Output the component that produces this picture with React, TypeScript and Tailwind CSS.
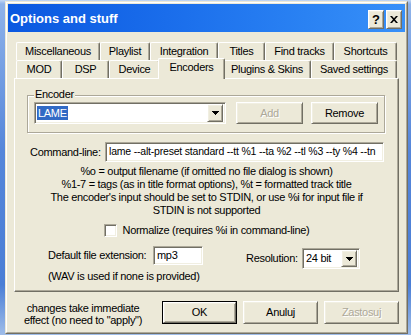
const raised =
  "border border-t-white border-l-white border-r-[#716f64] border-b-[#716f64] shadow-[inset_1px_1px_0_#f1efe2,inset_-1px_-1px_0_#aca899] bg-[#ece9d8]";
const sunken =
  "border border-t-[#aca899] border-l-[#aca899] border-r-white border-b-white shadow-[inset_1px_1px_0_#716f64,inset_-1px_-1px_0_#f1efe2] bg-white";

function Arrow() {
  return (
    <svg width="7" height="4" viewBox="0 0 7 4" className="block">
      <path d="M0 0h7v1h-1v1h-1v1h-1v1h-1v-1h-1v-1h-1v-1h-1z" fill="#000" />
    </svg>
  );
}

function Tab({ label, w }: { label: string; w: number }) {
  return (
    <div
      style={{ width: w }}
      className="h-[18px] shrink-0 flex items-center justify-center border-t border-l border-r border-t-white border-l-white border-r-[#716f64] rounded-t-[2px] shadow-[inset_-1px_0_0_#aca899] bg-[#ece9d8] whitespace-nowrap"
    >
      {label}
    </div>
  );
}

export default function App() {
  const row1: [string, number][] = [
    ["Miscellaneous", 84],
    ["Playlist", 50],
    ["Integration", 68],
    ["Titles", 47],
    ["Find tracks", 69],
    ["Shortcuts", 63],
  ];
  return (
    <div className="w-[411px] h-[335px] overflow-hidden bg-[linear-gradient(180deg,#c4d8f4_0px,#8fb3ea_4px,#5586da_45%,#4a7ed6_85%,#9fbde9_100%)] font-['Liberation_Sans',Arial,sans-serif] text-[11px] tracking-[-0.3px] text-black">
      <div className="ml-[5px] mt-[1px] w-[403px] h-[333px] border border-t-[#ece9d8] border-l-[#ece9d8] border-r-[#716f64] border-b-[#716f64]">
        <div className="w-full h-full border border-t-white border-l-white border-r-[#aca899] border-b-[#aca899] bg-[#ece9d8] p-[1px] flex flex-col">
          {/* Title bar */}
          <div className="h-[28px] shrink-0 flex bg-[linear-gradient(90deg,#0a58e0_0%,#1a6deb_40%,#2a82f3_75%,#3890f8_100%)]">
            <div className="pl-[2px] pt-[7px] text-white font-bold text-[13px] leading-[16px] tracking-normal">
              Options and stuff
            </div>
            <div className="ml-auto mt-[6px] mr-[3px] flex gap-[2px] h-[19px]">
              <div className={`${raised} w-[16px] h-[19px] flex items-center justify-center font-bold text-[13px] leading-none tracking-normal`}>
                ?
              </div>
              <div className={`${raised} w-[16px] h-[19px] flex items-center justify-center`}>
                <svg width="8" height="7" viewBox="0 0 8 7">
                  <path d="M0 0h2l2 2.3L6 0h2L5 3.5 8 7H6L4 4.7 2 7H0l3-3.5z" fill="#000" />
                </svg>
              </div>
            </div>
          </div>

          {/* Client */}
          <div className="flex-1 pt-[10px]">
            <div className="ml-[6px] w-[385px]">
              {/* tab rows */}
              <div className="pl-[2px]">
                <div className="flex h-[18px]">
                  {row1.map(([l, w]) => (
                    <Tab key={l} label={l} w={w} />
                  ))}
                </div>
                <div className="flex h-[18px] items-end">
                  <Tab label="MOD" w={46} />
                  <Tab label="DSP" w={47} />
                  <Tab label="Device" w={51} />
                  <div className="relative z-10 w-[67px] h-[21px] -mx-[2px] -mb-[1px] shrink-0 flex items-center justify-center pb-[4px] border-t border-l border-r border-t-white border-l-white border-r-[#716f64] rounded-t-[2px] shadow-[inset_-1px_0_0_#aca899] bg-[#ece9d8]">
                    Encoders
                  </div>
                  <Tab label="Plugins & Skins" w={88} />
                  <Tab label="Saved settings" w={86} />
                </div>
              </div>

              {/* panel */}
              <div className="h-[214px] border-t border-l border-r border-b border-t-white border-l-white border-r-[#716f64] border-b-[#716f64] shadow-[inset_-1px_-1px_0_#aca899] flex flex-col">
                {/* Encoder group */}
                <div className="relative ml-[12px] mt-[16px] w-[358px] h-[38px] border border-[#aca899] shadow-[inset_1px_1px_0_#fff,1px_1px_0_#fff]">
                  <span className="absolute left-[6px] -top-[8px] px-[1px] bg-[#ece9d8] leading-[13px]">
                    Encoder
                  </span>
                  <div className="flex items-center pl-[6px] pt-[6px]">
                    <div className={`${sunken} w-[192px] h-[22px] flex items-center pl-[2px] pr-[2px]`}>
                      <span className="bg-[#316ac5] text-white leading-[14px] px-[1px]">LAME</span>
                      <div className={`${raised} ml-auto w-[16px] h-[18px] flex items-center justify-center`}>
                        <Arrow />
                      </div>
                    </div>
                    <div className={`${raised} ml-[10px] w-[67px] h-[22px] flex items-center justify-center text-[#aca899] [text-shadow:1px_1px_0_#fff]`}>
                      Add
                    </div>
                    <div className={`${raised} ml-[8px] w-[67px] h-[22px] flex items-center justify-center`}>
                      Remove
                    </div>
                  </div>
                </div>

                {/* Command line */}
                <div className="mt-[9px] ml-[15px] flex items-center">
                  <span className="w-[75px]">Command-line:</span>
                  <div className={`${sunken} w-[279px] h-[20px] flex items-center pl-[3px] whitespace-nowrap overflow-hidden text-[10.5px] tracking-[-0.2px]`}>
                    lame --alt-preset standard --tt %1 --ta %2 --tl %3 --ty %4 --tn
                  </div>
                </div>

                {/* Info */}
                <div className="mt-[3px] text-center leading-[13px]">
                  %o = output filename (if omitted no file dialog is shown)
                  <br />
                  %1-7 = tags (as in title format options), %t = formatted track title
                  <br />
                  The encoder's input should be set to STDIN, or use %i for input file if
                  <br />
                  STDIN is not supported
                </div>

                {/* Normalize */}
                <div className="mt-[7px] flex justify-center items-center h-[13px] gap-[6px]">
                  <div className={`${sunken} w-[13px] h-[13px]`} />
                  <span className="leading-[13px]">Normalize (requires %i in command-line)</span>
                </div>

                {/* ext / resolution */}
                <div className="mt-[9px] ml-[33px] flex">
                  <div className="w-[155px]">
                    <div className="flex items-center h-[19px]">
                      <span className="w-[105px] whitespace-nowrap">Default file extension:</span>
                      <div className={`${sunken} w-[50px] h-[19px] flex items-center pl-[3px]`}>mp3</div>
                    </div>
                    <div className="mt-[5px] leading-[13px] whitespace-nowrap">
                      (WAV is used if none is provided)
                    </div>
                  </div>
                  <div className="ml-[43px] mt-[2px] flex items-center h-[21px]">
                    <span className="w-[56px]">Resolution:</span>
                    <div className={`${sunken} w-[58px] h-[21px] flex items-center pl-[3px] pr-[2px]`}>
                      <span>24 bit</span>
                      <div className={`${raised} ml-auto w-[16px] h-[17px] flex items-center justify-center`}>
                        <Arrow />
                      </div>
                    </div>
                  </div>
                </div>
              </div>
            </div>

            {/* bottom row */}
            <div className="mt-[9px] ml-[6px] flex">
              <div className="w-[138px] text-center leading-[12px] pt-[1px]">
                changes take immediate
                <br />
                effect (no need to "apply")
              </div>
              <div className="ml-[10px] flex gap-[6px]">
                <div className="w-[75px] h-[23px] border border-black">
                  <div className={`${raised} w-full h-full flex items-center justify-center`}>OK</div>
                </div>
                <div className={`${raised} w-[75px] h-[23px] flex items-center justify-center`}>Anuluj</div>
                <div className={`${raised} w-[75px] h-[23px] flex items-center justify-center text-[#aca899] [text-shadow:1px_1px_0_#fff]`}>
                  Zastosuj
                </div>
              </div>
            </div>
          </div>
        </div>
      </div>
    </div>
  );
}
